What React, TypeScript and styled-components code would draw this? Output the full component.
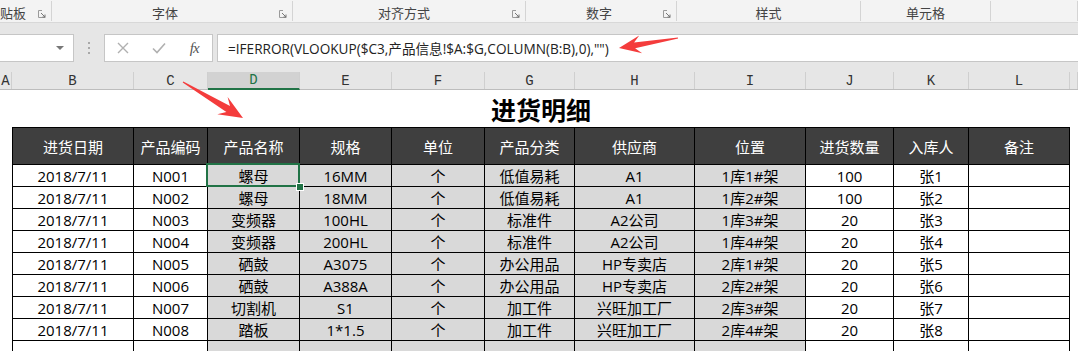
import React from 'react';
import styled, { createGlobalStyle, css } from 'styled-components';

const GlobalStyle = createGlobalStyle`
  html, body {
    margin: 0;
    padding: 0;
    background: #ffffff;
    overflow: hidden;
  }
  * {
    box-sizing: border-box;
  }
`;

const UI_FONT = `"Open Sans", "Noto Sans CJK SC", sans-serif`;
const GREEN = '#217346';
const COLS = '12px 122px 74px 92px 92px 93px 90px 120px 111px 88px 75px 101px 1fr';

const Page = styled.div`
  position: relative;
  width: 1078px;
  height: 351px;
  overflow: hidden;
  background: #e6e6e6;
  font-family: ${UI_FONT};
`;

// ribbon group labels
const Ribbon = styled.div`
  display: flex;
  height: 23px;
  background: #f3f3f3;
  border-bottom: 1px solid #d8d8d8;
`;

const Group = styled.div<{ $w?: number; $left?: boolean }>`
  position: relative;
  display: flex;
  align-items: center;
  justify-content: ${(p) => (p.$left ? 'flex-start' : 'center')};
  ${(p) => (p.$w ? `width: ${p.$w}px;` : 'flex: 1;')}
  height: 20px;
  margin-top: 1px;
  border-right: 1px solid #d4d4d4;
  font-size: 13px;
  color: #444;
  white-space: nowrap;
`;

const GroupLabel = styled.span<{ $shift?: number }>`
  margin-left: ${(p) => p.$shift || 0}px;
  padding-top: 3px;
`;

const Launcher = styled.svg`
  position: absolute;
  right: 5px;
  bottom: 3px;
  width: 8px;
  height: 8px;
`;

const LauncherIcon = () => (
  <Launcher viewBox="0 0 8 8">
    <path d="M0.5 0.5 V7.5 H7.5" fill="none" stroke="#9a9a9a" strokeWidth="1" />
    <path d="M0.5 0.5 H4" fill="none" stroke="#9a9a9a" strokeWidth="1" />
    <path d="M3 3 L7 7 M7 4.5 V7 H4.5" fill="none" stroke="#777" strokeWidth="1" />
  </Launcher>
);

// formula bar
const FormulaRow = styled.div`
  display: flex;
  height: 28px;
  margin-top: 11px;
  margin-bottom: 10px;
`;

const NameBox = styled.div`
  position: relative;
  width: 75px;
  margin-left: -1px;
  background: #fff;
  border: 1px solid #c6c6c6;
`;

const DropArrow = styled.span`
  position: absolute;
  right: 9px;
  top: 11px;
  width: 0;
  height: 0;
  border-left: 4px solid transparent;
  border-right: 4px solid transparent;
  border-top: 4px solid #777;
`;

const Grip = styled.div`
  width: 30px;
  display: flex;
  flex-direction: column;
  align-items: center;
  justify-content: center;
  gap: 3px;
  span {
    width: 2px;
    height: 2px;
    background: #a8a8a8;
  }
`;

const FxBox = styled.div`
  display: flex;
  align-items: center;
  width: 109px;
  background: #fff;
  border: 1px solid #c6c6c6;
`;

const FxButton = styled.span`
  flex: 1;
  display: flex;
  align-items: center;
  justify-content: center;
`;

const FxText = styled.span`
  font-family: "Liberation Serif", serif;
  font-style: italic;
  font-size: 15px;
  color: #555;
  letter-spacing: -1px;
`;

const FormulaInput = styled.div`
  flex: 1;
  margin-left: 4px;
  display: flex;
  align-items: center;
  padding-left: 10px;
  background: #fff;
  border: 1px solid #c6c6c6;
  border-right: none;
  font-size: 13.6px;
  color: #222;
  white-space: nowrap;
`;

// column letters
const ColHeader = styled.div`
  display: grid;
  grid-template-columns: ${COLS};
  height: 18px;
  background: #e6e6e6;
  border-bottom: 1px solid #bdbdbd;
`;

const ColLetter = styled.div<{ $active?: boolean }>`
  display: flex;
  align-items: center;
  justify-content: center;
  border-right: 1px solid #cfcfcf;
  font-family: "Liberation Mono", monospace;
  font-size: 14px;
  color: #333;
  ${(p) =>
    p.$active &&
    css`
      background: #d2d2d2;
      color: ${GREEN};
      border-bottom: 2px solid ${GREEN};
      margin-bottom: -1px;
    `}
`;

// sheet
const Sheet = styled.div`
  background: #fff;
  height: 262px;
`;

const Title = styled.div`
  display: grid;
  grid-template-columns: ${COLS};
  height: 37px;
  align-items: center;
  div {
    grid-column: 2 / 13;
    text-align: center;
    font-family: "Noto Sans CJK SC", sans-serif;
    font-weight: 700;
    font-size: 25px;
    color: #000;
    padding-top: 1px;
  }
`;

const Row = styled.div<{ $h: number }>`
  display: grid;
  grid-template-columns: ${COLS};
  height: ${(p) => p.$h}px;
`;

const Cell = styled.div<{ $head?: boolean; $shade?: boolean; $first?: boolean; $selected?: boolean }>`
  position: relative;
  display: flex;
  align-items: center;
  justify-content: center;
  border-right: 1px solid #000;
  border-bottom: 1px solid #000;
  font-size: 15px;
  color: #000;
  white-space: nowrap;
  background: ${(p) => (p.$head ? '#3f3f3f' : p.$shade ? '#d9d9d9' : '#fff')};
  ${(p) => p.$first && 'border-left: 1px solid #000;'}
  ${(p) =>
    p.$head &&
    css`
      color: #fff;
      border-top: 1px solid #000;
    `}
  ${(p) =>
    p.$selected &&
    css`
      z-index: 2;
      &::after {
        content: '';
        position: absolute;
        left: -2px;
        top: -2px;
        right: -1px;
        bottom: -1px;
        border: 2px solid ${GREEN};
      }
      &::before {
        content: '';
        position: absolute;
        right: -5px;
        bottom: -5px;
        width: 6px;
        height: 6px;
        background: ${GREEN};
        border: 1px solid #fff;
        z-index: 3;
      }
    `}
`;

const Overlay = styled.svg`
  position: absolute;
  left: 0;
  top: 0;
  pointer-events: none;
`;

const headers = ['进货日期', '产品编码', '产品名称', '规格', '单位', '产品分类', '供应商', '位置', '进货数量', '入库人', '备注'];

const rows = [
  ['2018/7/11', 'N001', '螺母', '16MM', '个', '低值易耗', 'A1', '1库1#架', '100', '张1', ''],
  ['2018/7/11', 'N002', '螺母', '18MM', '个', '低值易耗', 'A1', '1库2#架', '100', '张2', ''],
  ['2018/7/11', 'N003', '变频器', '100HL', '个', '标准件', 'A2公司', '1库3#架', '20', '张3', ''],
  ['2018/7/11', 'N004', '变频器', '200HL', '个', '标准件', 'A2公司', '1库4#架', '20', '张4', ''],
  ['2018/7/11', 'N005', '硒鼓', 'A3075', '个', '办公用品', 'HP专卖店', '2库1#架', '20', '张5', ''],
  ['2018/7/11', 'N006', '硒鼓', 'A388A', '个', '办公用品', 'HP专卖店', '2库2#架', '20', '张6', ''],
  ['2018/7/11', 'N007', '切割机', 'S1', '个', '加工件', '兴旺加工厂', '2库3#架', '20', '张7', ''],
  ['2018/7/11', 'N008', '踏板', '1*1.5', '个', '加工件', '兴旺加工厂', '2库4#架', '20', '张8', ''],
  ['', '', '', '', '', '', '', '', '', '', ''],
];

const letters = ['A', 'B', 'C', 'D', 'E', 'F', 'G', 'H', 'I', 'J', 'K', 'L', ''];

// shaded columns D..I (index 2..7 in data)
const isShaded = (i: number) => i >= 2 && i <= 7;

const arrowPoints = (
  tx: number, ty: number, px: number, py: number,
  headLen: number, headHalf: number, neckHalf: number
) => {
  const len = Math.hypot(px - tx, py - ty);
  const ux = (px - tx) / len;
  const uy = (py - ty) / len;
  const nx = -uy;
  const ny = ux;
  const pt = (along: number, side: number) =>
    `${(px - ux * along + nx * side).toFixed(1)},${(py - uy * along + ny * side).toFixed(1)}`;
  return [
    pt(len, 0.6),
    pt(headLen * 0.72, neckHalf),
    pt(headLen, headHalf),
    pt(0, 0),
    pt(headLen, -headHalf),
    pt(headLen * 0.72, -neckHalf),
    pt(len, -0.6),
  ].join(' ');
};

const App = () => {
  return (
    <Page>
      <GlobalStyle />
      <Ribbon>
        <Group $w={52} $left>
          <GroupLabel>贴板</GroupLabel>
          <LauncherIcon />
        </Group>
        <Group $w={241}>
          <GroupLabel $shift={-14}>字体</GroupLabel>
          <LauncherIcon />
        </Group>
        <Group $w={233}>
          <GroupLabel $shift={-10}>对齐方式</GroupLabel>
          <LauncherIcon />
        </Group>
        <Group $w={151}>
          <GroupLabel $shift={-4}>数字</GroupLabel>
          <LauncherIcon />
        </Group>
        <Group $w={184}>
          <GroupLabel>样式</GroupLabel>
        </Group>
        <Group $w={130}>
          <GroupLabel>单元格</GroupLabel>
        </Group>
        <Group />
      </Ribbon>

      <FormulaRow>
        <NameBox>
          <DropArrow />
        </NameBox>
        <Grip>
          <span />
          <span />
          <span />
        </Grip>
        <FxBox>
          <FxButton>
            <svg width="12" height="12" viewBox="0 0 12 12">
              <path d="M1 1 L11 11 M11 1 L1 11" stroke="#b0b0b0" strokeWidth="1.4" />
            </svg>
          </FxButton>
          <FxButton>
            <svg width="14" height="12" viewBox="0 0 14 12">
              <path d="M1 6.5 L5 10.5 L13 1.5" fill="none" stroke="#b0b0b0" strokeWidth="1.6" />
            </svg>
          </FxButton>
          <FxButton>
            <FxText>fx</FxText>
          </FxButton>
        </FxBox>
        <FormulaInput>=IFERROR(VLOOKUP($C3,产品信息!$A:$G,COLUMN(B:B),0),"")</FormulaInput>
      </FormulaRow>

      <ColHeader>
        {letters.map((l, i) => (
          <ColLetter key={i} $active={l === 'D'}>
            {l}
          </ColLetter>
        ))}
      </ColHeader>

      <Sheet>
        <Title>
          <div>进货明细</div>
        </Title>
        <Row $h={38}>
          <div />
          {headers.map((h, i) => (
            <Cell key={h} $head $first={i === 0}>
              {h}
            </Cell>
          ))}
        </Row>
        {rows.map((r, ri) => (
          <Row key={ri} $h={22}>
            <div />
            {r.map((v, ci) => (
              <Cell key={ci} $first={ci === 0} $shade={isShaded(ci)} $selected={ri === 0 && ci === 2}>
                {v}
              </Cell>
            ))}
          </Row>
        ))}
      </Sheet>

      <Overlay width={1078} height={351} viewBox="0 0 1078 351">
        <polygon points={arrowPoints(678, 38, 619, 48, 22, 9, 3)} fill="#f43c3c" />
        <polygon points={arrowPoints(183, 82, 243, 118, 24, 10, 3.5)} fill="#f43c3c" />
      </Overlay>
    </Page>
  );
};

export default App;
